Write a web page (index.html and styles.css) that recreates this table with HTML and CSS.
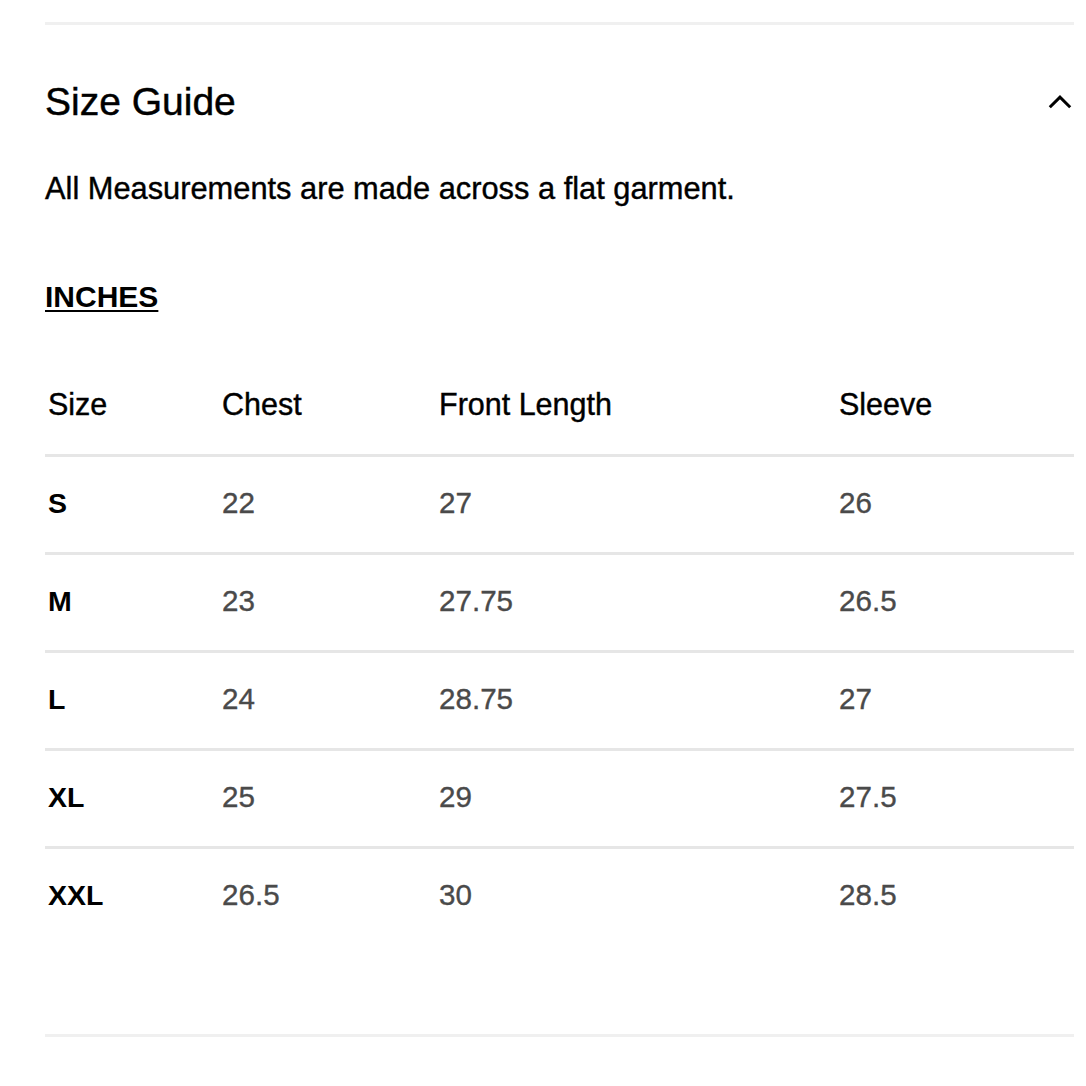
FILE: index.html
```html
<!DOCTYPE html>
<html lang="en">
<head>
<meta charset="utf-8">
<title>Size Guide</title>
<link rel="stylesheet" href="styles.css">
</head>
<body>
<div class="page">
  <div class="rule"></div>
  <section class="accordion">
    <div class="acc-head">
      <h2 class="acc-title">Size Guide</h2>
      <svg class="chevron" width="24" height="14" viewBox="0 0 24 14" aria-hidden="true">
        <polyline points="1.8,12.2 12,2.2 22.2,12.2" fill="none" stroke="#000" stroke-width="3" stroke-linecap="butt" stroke-linejoin="miter"/>
      </svg>
    </div>
    <p class="note">All Measurements are made across a flat garment.</p>
    <h3 class="unit">INCHES</h3>
    <table class="sizes">
      <colgroup>
        <col class="c1"><col class="c2"><col class="c3"><col class="c4">
      </colgroup>
      <thead>
        <tr><th>Size</th><th>Chest</th><th>Front Length</th><th>Sleeve</th></tr>
      </thead>
      <tbody>
        <tr><td class="lbl">S</td><td>22</td><td>27</td><td>26</td></tr>
        <tr><td class="lbl">M</td><td>23</td><td>27.75</td><td>26.5</td></tr>
        <tr><td class="lbl">L</td><td>24</td><td>28.75</td><td>27</td></tr>
        <tr><td class="lbl">XL</td><td>25</td><td>29</td><td>27.5</td></tr>
        <tr><td class="lbl">XXL</td><td>26.5</td><td>30</td><td>28.5</td></tr>
      </tbody>
    </table>
  </section>
  <div class="rule rule-bottom"></div>
</div>
</body>
</html>
```

FILE: styles.css
```css
html, body {
  margin: 0;
  padding: 0;
  background: #ffffff;
}

body {
  font-family: "Liberation Sans", Arial, Helvetica, sans-serif;
  color: #000;
}

.page {
  padding: 22px 12px 0 45px;
}

.rule {
  height: 3px;
  background: #f0f0f0;
}

.rule-bottom {
  margin-top: 90px;
}

.acc-head {
  display: flex;
  align-items: center;
  justify-content: space-between;
  margin-top: 52px;
}

.acc-title {
  margin: 0;
  font-size: 39px;
  font-weight: 400;
  line-height: 50px;
  -webkit-text-stroke: 0.45px currentColor;
}

.chevron {
  display: block;
  margin-right: 2px;
}

.note {
  margin: 42px 0 0;
  font-size: 30.8px;
  line-height: 40px;
  -webkit-text-stroke: 0.4px currentColor;
}

.unit {
  margin: 68px 0 0;
  font-size: 30px;
  font-weight: 700;
  line-height: 40px;
  text-decoration: underline;
  text-decoration-thickness: 2px;
  text-underline-offset: 3px;
  display: inline-block;
}

.sizes {
  width: 100%;
  margin-top: 67px;
  border-collapse: separate;
  border-spacing: 0;
  table-layout: fixed;
}

.c1 { width: 174px; }
.c2 { width: 217px; }
.c3 { width: 400px; }

.sizes th,
.sizes td {
  text-align: left;
  padding: 0 0 0 3px;
  line-height: 40px;
  white-space: nowrap;
}

.sizes th {
  font-size: 30.5px;
  font-weight: 400;
  color: #000;
  padding-bottom: 30px;
  -webkit-text-stroke: 0.4px currentColor;
}

.sizes td {
  font-size: 29.6px;
  color: #4a4a4a;
  border-top: 3px solid #e6e6e6;
  padding-top: 26px;
  padding-bottom: 29px;
  -webkit-text-stroke: 0.35px currentColor;
}

.sizes td.lbl {
  color: #000;
  font-weight: 700;
  font-size: 28.5px;
  -webkit-text-stroke: 0;
}
```
